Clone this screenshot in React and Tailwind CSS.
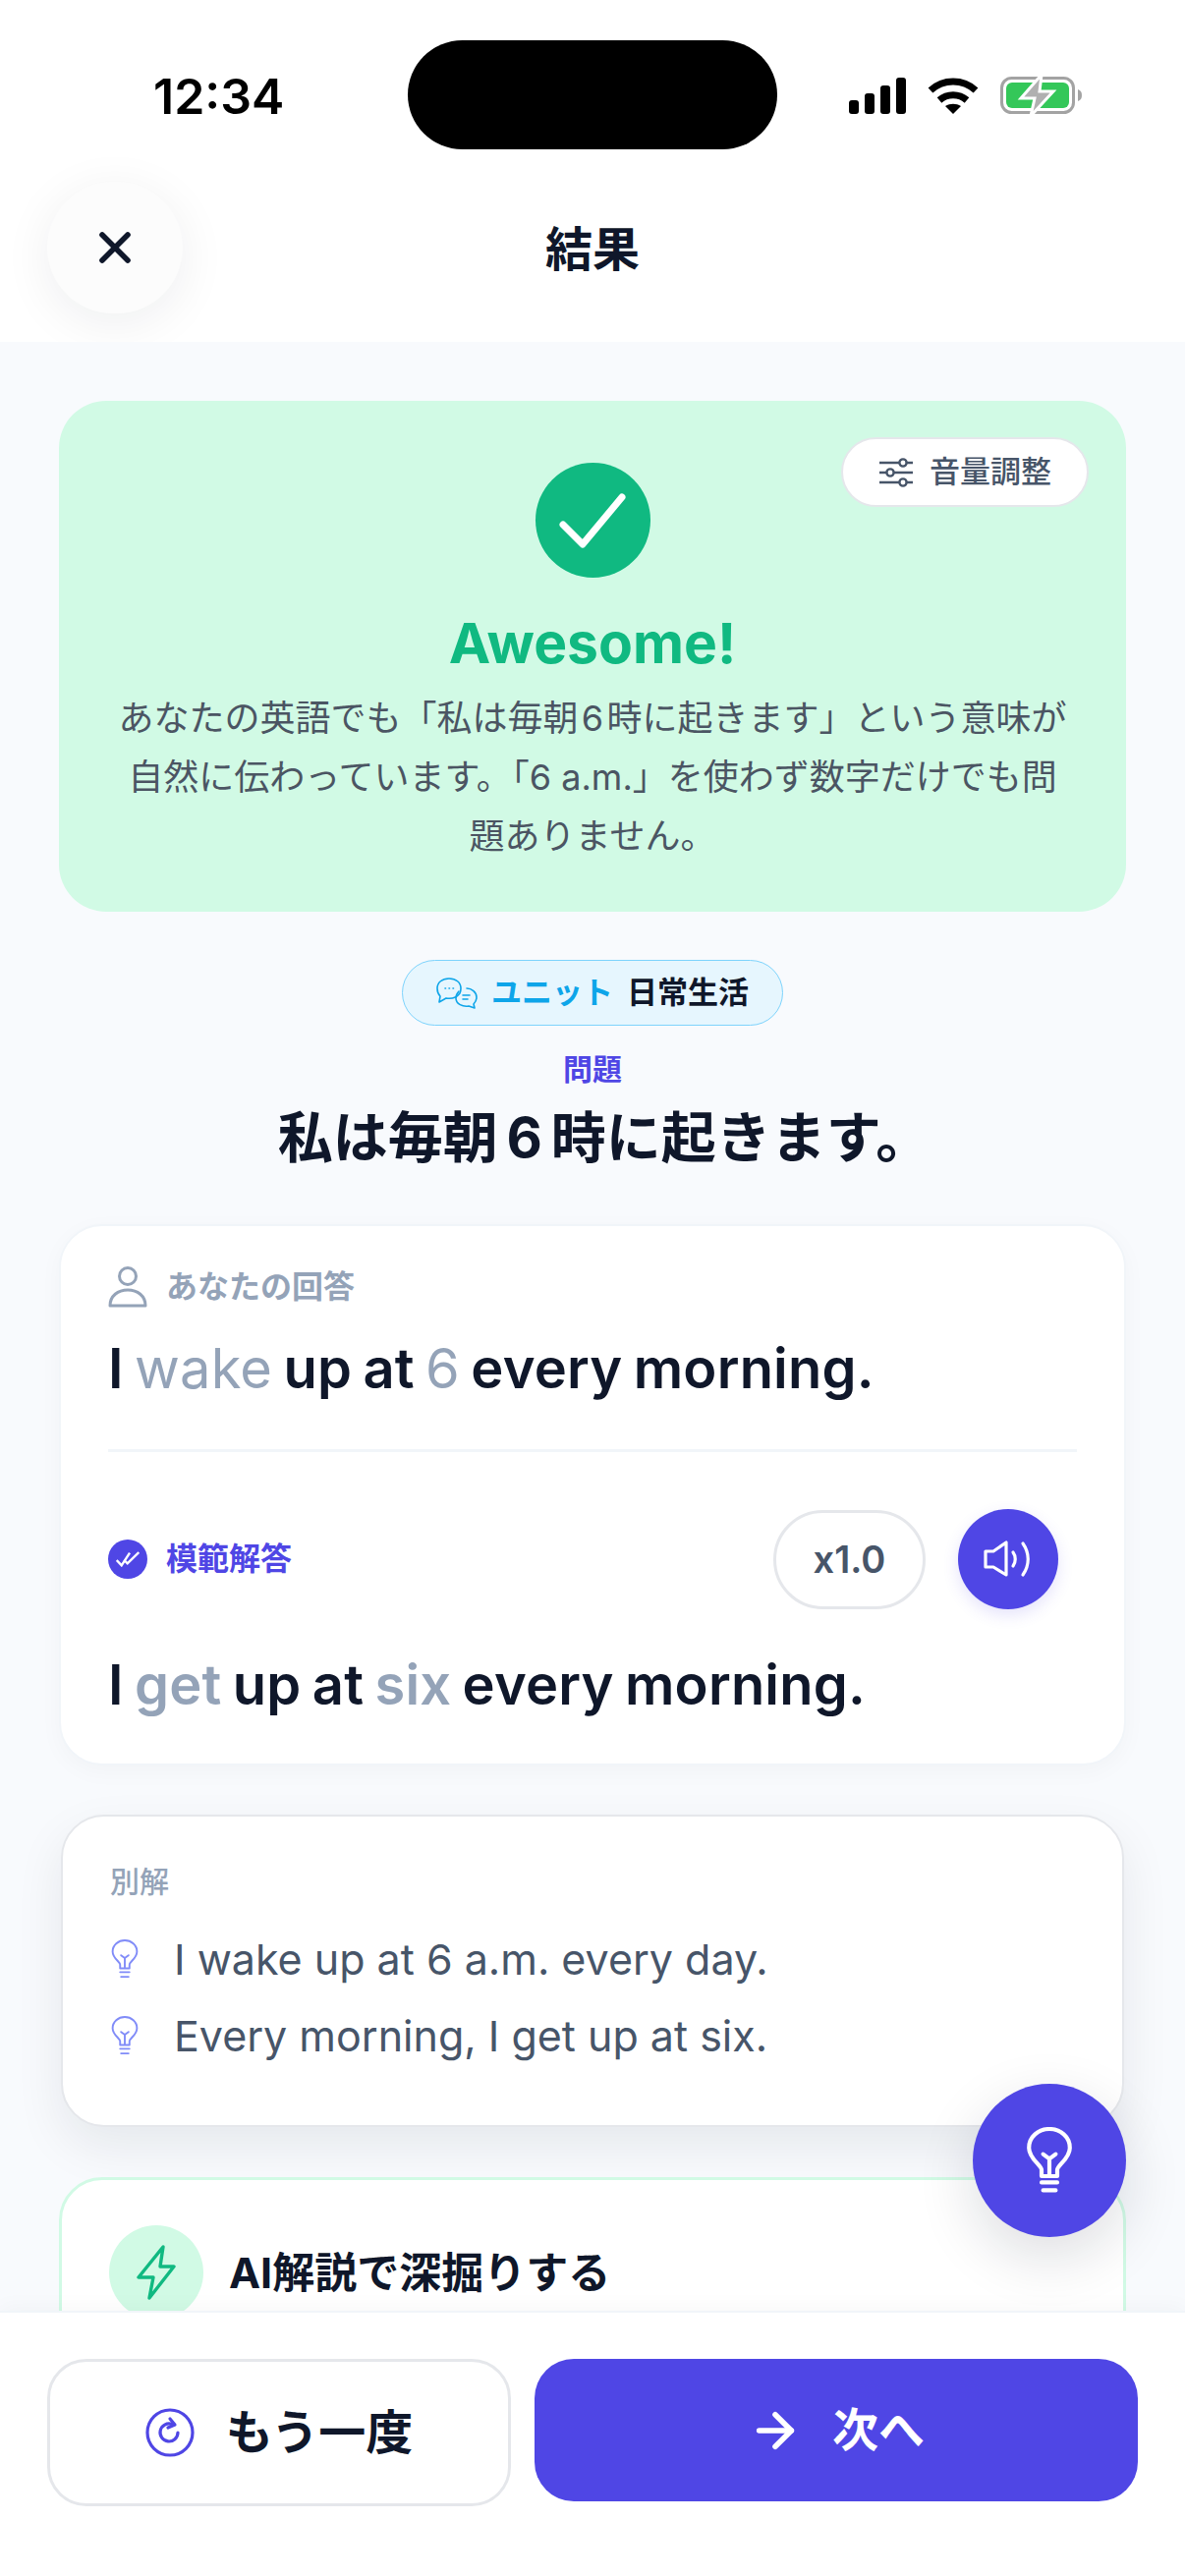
import { X, ArrowRight } from "lucide-react";

function Signal() {
  return (
    <svg width="58" height="37" viewBox="0 0 58 37" fill="#000">
      <rect x="0" y="23" width="10" height="14" rx="3" />
      <rect x="16" y="16" width="10" height="21" rx="3" />
      <rect x="32" y="8" width="10" height="29" rx="3" />
      <rect x="48" y="0" width="10" height="37" rx="3" />
    </svg>
  );
}

function Wifi() {
  return (
    <svg width="52" height="37" viewBox="0 0 52 37" fill="none" stroke="#000" strokeWidth="7">
      <path d="M3 13 C16 1 36 1 49 13" />
      <path d="M12 23 C20 16 32 16 40 23" />
      <path d="M26 37 L18 29 C23 26 29 26 34 29 Z" fill="#000" stroke="none" />
    </svg>
  );
}

function Battery() {
  return (
    <svg width="84" height="42" viewBox="0 0 84 42">
      <rect x="1.5" y="3.5" width="73" height="35" rx="10" fill="none" stroke="#a3a3a3" strokeWidth="3" />
      <rect x="6" y="8" width="64" height="26" rx="6" fill="#34c759" />
      <path d="M79 15 C82 16 83 18 83 21 C83 24 82 26 79 27 Z" fill="#a3a3a3" />
      <path d="M42 0 L21 24 L35 24 L31 42 L54 17 L40 17 Z" fill="#b0b0b0" stroke="#fff" strokeWidth="3" />
    </svg>
  );
}

function Sliders() {
  return (
    <svg width="36" height="30" viewBox="0 0 36 30" fill="none" stroke="#475569" strokeWidth="2.4">
      <path d="M1 5 H21 M29 5 H35" />
      <path d="M1 15 H8 M16 15 H35" />
      <path d="M1 25 H21 M29 25 H35" />
      <circle cx="25" cy="5" r="3.6" />
      <circle cx="12" cy="15" r="3.6" />
      <circle cx="25" cy="25" r="3.6" />
    </svg>
  );
}

function Chats() {
  return (
    <svg width="42" height="32" viewBox="0 0 42 32" fill="none" stroke="#0ea5e9" strokeWidth="1.6" strokeLinecap="round" strokeLinejoin="round">
      <path d="M13 1 C6 1 1 5 1 11 C1 14 2 17 4 19 L3 25 L10 21 C16 22 21 20 24 16 C25 14 25 12 25 11 C25 5 20 1 13 1 Z" />
      <path d="M31 11 C36 11 41 15 41 20 C41 23 40 25 38 27 L39 31 L33 29 C27 30 20 27 20 21 C20 18 21 16 23 14" />
      <path d="M9 11 H9.5 M13 11 H13.5 M17 11 H17.5" />
      <path d="M27 18 H34 M27 22 H32" />
    </svg>
  );
}

function UserIcon() {
  return (
    <svg width="40" height="42" viewBox="0 0 40 42" fill="none" stroke="#94a3b8" strokeWidth="3" strokeLinejoin="round">
      <circle cx="20" cy="10" r="8.5" />
      <path d="M2 40 C2 30 10 24 20 24 C30 24 38 30 38 40 Z" />
    </svg>
  );
}

function DoubleCheck() {
  return (
    <div className="w-10 h-10 rounded-full bg-[#4f46e5] flex items-center justify-center">
      <svg width="24" height="16" viewBox="0 0 24 16" fill="none" stroke="#fff" strokeWidth="2.4">
        <path d="M0.7 9 L5.7 14.3 L14 1.7" />
        <path d="M8.3 9 L11.7 12.3 L23.3 1" />
      </svg>
    </div>
  );
}

function Speaker() {
  return (
    <svg width="50" height="40" viewBox="0 0 50 40" fill="none" stroke="#fff" strokeWidth="3.2" strokeLinecap="round" strokeLinejoin="round">
      <path d="M2 12 H10 L23 3 V36 L10 28 H2 Z" />
      <path d="M30 13 C33 17 33 23 30 27" />
      <path d="M40 4 C47 14 47 26 40 36" />
    </svg>
  );
}

function Bulb({ w, h, color, sw }) {
  return (
    <svg width={w} height={h} viewBox="0 0 30 42" fill="none" stroke={color} strokeWidth={sw} strokeLinecap="round" strokeLinejoin="round">
      <path d="M10 31 V27 C10 24 2 20 2 13 C2 6 8 1 15 1 C22 1 28 6 28 13 C28 20 20 24 20 27 V31 Z" />
      <path d="M11 17 L15 20 L19 17 M15 20 V30" />
      <path d="M10 35 H20 M11 40 H19" />
    </svg>
  );
}

function Bolt() {
  return (
    <svg width="42" height="58" viewBox="0 0 42 58" fill="none" stroke="#10b981" strokeWidth="3.4" strokeLinejoin="round">
      <path d="M28 3 L3 34 H18 L14 55 L39 23 H25 Z" />
    </svg>
  );
}

function Retry() {
  return (
    <svg width="50" height="50" viewBox="0 0 50 50" fill="none" stroke="#4f46e5" strokeWidth="3.2" strokeLinecap="round" strokeLinejoin="round">
      <circle cx="25" cy="25" r="23" />
      <path d="M33 25 A9 9 0 1 1 27 16.5" />
      <path d="M25 11 L30 17 L23 20" />
    </svg>
  );
}

export default function App() {
  return (
    <div className="w-[1206px] h-[2622px] relative overflow-hidden bg-[#f8fafd] flex flex-col font-['Inter','Noto_Sans_CJK_JP',sans-serif] text-[#0f172a]">
      {/* status bar + title */}
      <div className="bg-white h-[348px] shrink-0 flex flex-col overflow-hidden">
        <div className="h-[185px] relative flex items-start justify-between pl-[156px] pr-[104px] pt-[72px]">
          <span className="text-[50px] leading-[52px] font-semibold text-black">12:34</span>
          <div className="absolute left-[415px] top-[41px] w-[376px] h-[111px] rounded-[56px] bg-black" />
          <div className="flex items-center gap-[22px] pt-[4px]">
            <Signal />
            <Wifi />
            <Battery />
          </div>
        </div>
        <div className="flex items-center pl-[48px] h-[134px] relative">
          <div className="w-[138px] h-[134px] rounded-full bg-[#fcfcfc] shadow-[0_10px_50px_rgba(15,23,42,0.07)] flex items-center justify-center">
            <X size={52} strokeWidth={2.6} color="#0f172a" />
          </div>
          <span className="absolute left-0 right-0 top-[2px] text-center text-[48px] leading-[134px] font-bold">結果</span>
        </div>
      </div>

      {/* content */}
      <div className="flex-1 overflow-hidden px-[60px] pt-[60px] flex flex-col items-stretch">
        <div className="relative h-[520px] shrink-0 rounded-[48px] bg-[#d1fae5] flex flex-col items-center pt-[63px]">
          <div className="absolute right-[38px] top-[37px] w-[252px] h-[71px] rounded-full bg-white border-2 border-[#e5e7eb] flex items-center justify-center gap-[16px] text-[#475569] text-[31px] font-medium">
            <Sliders />
            <span>音量調整</span>
          </div>
          <div className="w-[117px] h-[117px] rounded-full bg-[#10b981] flex items-center justify-center">
            <svg width="70" height="60" viewBox="0 0 70 60" fill="none" stroke="#fff" strokeWidth="7" strokeLinecap="round" strokeLinejoin="round">
              <path d="M5 34 L25 54 L65 6" />
            </svg>
          </div>
          <div className="mt-[32px] text-[57px] leading-[70px] font-bold text-[#10b981]">Awesome!</div>
          <p className="mt-[11px] w-[975px] text-center text-[36px] leading-[60px] text-[#4b5563]">
            あなたの英語でも「私は毎朝{"\u200A"}6{"\u200A"}時に起きます」という意味が自然に伝わっています。「6 a.m.」を使わず数字だけでも問題ありません。
          </p>
        </div>

        <div className="mt-[49px] self-center w-[388px] h-[67px] rounded-full border border-[#7dd3fc] bg-[#e6f6fe] flex items-center justify-center gap-[14px] shrink-0 text-[31px] font-semibold">
          <Chats />
          <span className="text-[#0ea5e9] font-bold">ユニット</span>
          <span className="text-[#0f172a]">日常生活</span>
        </div>
        <div className="mt-[26px] text-center text-[30px] leading-[36px] font-semibold text-[#4f46e5]">問題</div>
        <div className="mt-[18px] pl-[24px] text-center text-[56px] leading-[68px] font-bold">
          私は毎朝{"\u2009"}6{"\u2009"}時に起きます。
        </div>

        <div className="mt-[54px] h-[551px] shrink-0 rounded-[44px] bg-white border-2 border-[#f1f5f9] shadow-[0_6px_24px_rgba(15,23,42,0.03)] px-[48px] pt-[40px]">
          <div className="flex items-center gap-[19px] text-[32px] leading-[44px] font-semibold text-[#94a3b8]">
            <UserIcon />
            <span>あなたの回答</span>
          </div>
          <div className="mt-[25px] text-[56px] leading-[72px] font-semibold tracking-[0.2px] [word-spacing:-3px]">
            I <span className="text-[#94a3b8] font-normal">wake</span> up at <span className="text-[#94a3b8] font-normal">6</span> every morning.
          </div>
          <div className="mt-[46px] h-[3px] bg-[#f1f5f9]" />
          <div className="mt-[58px] flex items-center justify-between pr-[19px]">
            <div className="flex items-center gap-[19px] text-[32px] font-semibold text-[#4f46e5]">
              <DoubleCheck />
              <span>模範解答</span>
            </div>
            <div className="flex items-center gap-[33px]">
              <div className="w-[155px] h-[101px] rounded-full border-[3px] border-[#e5e7eb] flex items-center justify-center text-[38px] font-semibold text-[#475569]">x1.0</div>
              <div className="w-[102px] h-[102px] rounded-full bg-[#4f46e5] shadow-[0_6px_16px_rgba(79,70,229,0.15)] flex items-center justify-center">
                <Speaker />
              </div>
            </div>
          </div>
          <div className="mt-[41px] text-[56px] leading-[72px] font-semibold tracking-[0.2px] [word-spacing:-3px]">
            I <span className="text-[#94a3b8]">get</span> up at <span className="text-[#94a3b8]">six</span> every morning.
          </div>
        </div>

        <div className="mt-[50px] h-[318px] shrink-0 mx-[2px] rounded-[44px] bg-white border-2 border-[#e5e7eb] shadow-[0_20px_50px_rgba(15,23,42,0.08)] px-[48px] pt-[48px]">
          <div className="text-[30px] leading-[36px] font-medium text-[#94a3b8]">別解</div>
          <div className="mt-[36px] flex flex-col gap-[28px] text-[43px] leading-[50px] text-[#475569]">
            <div className="flex items-center gap-[35px]">
              <Bulb w={30} h={40} color="#818cf8" sw={2} />
              <span>I wake up at 6 a.m. every day.</span>
            </div>
            <div className="flex items-center gap-[35px]">
              <Bulb w={30} h={40} color="#818cf8" sw={2} />
              <span>Every morning, I get up at six.</span>
            </div>
          </div>
        </div>

        <div className="mt-[51px] h-[300px] shrink-0 rounded-[44px] bg-white border-[3px] border-[#d1fae5] px-[48px] pt-[46px]">
          <div className="flex items-center gap-[26px]">
            <div className="w-[96px] h-[96px] rounded-full bg-[#d1fae5] flex items-center justify-center">
              <Bolt />
            </div>
            <span className="text-[43px] font-bold">AI解説で深掘りする</span>
          </div>
        </div>
      </div>

      {/* floating tip button */}
      <div className="absolute left-[990px] top-[2121px] w-[156px] h-[156px] rounded-full bg-[#4f46e5] shadow-[0_20px_60px_rgba(15,23,42,0.14)] flex items-center justify-center">
        <Bulb w={48} h={68} color="#fff" sw={2.6} />
      </div>

      {/* bottom bar */}
      <div className="h-[270px] shrink-0 bg-white border-t-2 border-[#f1f5f9] shadow-[0_-4px_20px_rgba(15,23,42,0.03)] px-[48px] pt-[47px] flex items-start gap-[24px] relative">
        <div className="w-[472px] h-[150px] rounded-[40px] bg-white border-[3px] border-[#e5e7eb] flex items-center justify-center gap-[32px] text-[48px] font-bold">
          <Retry />
          <span>もう一度</span>
        </div>
        <div className="w-[614px] h-[145px] rounded-[40px] bg-[#4f46e5] flex items-center justify-center gap-[30px] text-[47px] font-bold text-white">
          <ArrowRight size={56} strokeWidth={2.4} />
          <span>次へ</span>
        </div>
      </div>
    </div>
  );
}
